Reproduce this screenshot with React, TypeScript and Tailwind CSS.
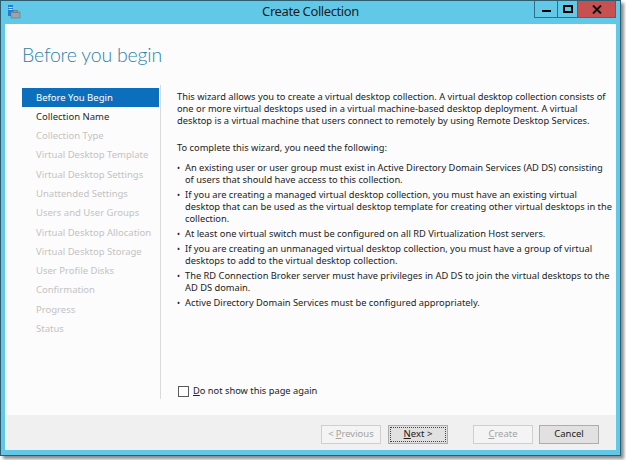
import React from "react";

const FONT = { fontFamily: '"Segoe UI", "Noto Sans", "Open Sans", sans-serif' };

const steps = [
  "Before You Begin",
  "Collection Name",
  "Collection Type",
  "Virtual Desktop Template",
  "Virtual Desktop Settings",
  "Unattended Settings",
  "Users and User Groups",
  "Virtual Desktop Allocation",
  "Virtual Desktop Storage",
  "User Profile Disks",
  "Confirmation",
  "Progress",
  "Status",
];

const bullets: string[][] = [
  [
    "An existing user or user group must exist in Active Directory Domain Services (AD DS) consisting",
    "of users that should have access to this collection.",
  ],
  [
    "If you are creating a managed virtual desktop collection, you must have an existing virtual",
    "desktop that can be used as the virtual desktop template for creating other virtual desktops in the",
    "collection.",
  ],
  ["At least one virtual switch must be configured on all RD Virtualization Host servers."],
  [
    "If you are creating an unmanaged virtual desktop collection, you must have a group of virtual",
    "desktops to add to the virtual desktop collection.",
  ],
  [
    "The RD Connection Broker server must have privileges in AD DS to join the virtual desktops to the",
    "AD DS domain.",
  ],
  ["Active Directory Domain Services must be configured appropriately."],
];

function Lines({ lines }: { lines: string[] }) {
  return (
    <>
      {lines.map((l, i) => (
        <div key={i} className="whitespace-nowrap">
          {l}
        </div>
      ))}
    </>
  );
}

function Btn({
  children,
  disabled,
  focused,
}: {
  children: React.ReactNode;
  disabled?: boolean;
  focused?: boolean;
}) {
  return (
    <div
      className={
        "w-[60px] h-[19px] flex items-center justify-center text-[9.5px] border " +
        (disabled
          ? "border-[#cfcfcf] bg-[#f4f4f4] text-[#a3a3a3]"
          : "border-[#adadad] bg-[#e1e1e1] text-[#1a1a1a]")
      }
    >
      {focused ? (
        <div className="w-[56px] h-[15px] border border-dotted border-[#444] flex items-center justify-center">
          {children}
        </div>
      ) : (
        children
      )}
    </div>
  );
}

export default function App() {
  return (
    <div className="w-[626px] h-[460px] bg-white overflow-hidden" style={FONT}>
      <div className="w-[621px] h-[456px] bg-[#62c8e8] border border-[#2f5d70] shadow-[3px_3px_3px_rgba(0,0,0,0.45)] flex flex-col">
        {/* title bar */}
        <div className="h-[22px] flex items-start relative">
          <div className="w-[26px] h-[22px] flex items-center justify-center">
            <svg width="14" height="14" viewBox="0 0 14 14">
              <rect x="1" y="0" width="5" height="11" fill="#1f7fd0" />
              <rect x="1.5" y="2" width="4" height="1" fill="#bfe3ff" />
              <rect x="1.5" y="4" width="4" height="1" fill="#bfe3ff" />
              <rect x="4" y="7" width="9" height="6" fill="#9aa3aa" stroke="#6c757d" strokeWidth="0.6" />
              <rect x="6.5" y="5.5" width="4" height="2" fill="none" stroke="#6c757d" strokeWidth="0.8" />
            </svg>
          </div>
          <div className="flex-1 h-[22px] flex items-center justify-center text-[13px] tracking-[-0.4px] text-[#1c1c1c] pl-[60px]">
            Create Collection
          </div>
          <div className="flex h-[17px] border-b border-l border-r border-[#2f6f88] mr-[4px]">
            <div className="w-[23px] h-full flex items-end justify-center pb-[5px] border-r border-[#2f6f88]">
              <div className="w-[9px] h-[2px] bg-black" />
            </div>
            <div className="w-[20px] h-full flex items-center justify-center border-r border-[#2f6f88]">
              <div className="w-[10px] h-[8px] border-2 border-black" />
            </div>
            <div className="w-[37px] h-full bg-[#c75050] flex items-center justify-center">
              <svg width="10" height="9" viewBox="0 0 10 9">
                <path d="M1 0.5 L9 8.5 M9 0.5 L1 8.5" stroke="#111" strokeWidth="2" />
              </svg>
            </div>
          </div>
        </div>
        {/* client area */}
        <div className="mx-[4px] mb-[5px] mt-[1px] flex-1 flex flex-col bg-[#fcfcfc]">
          <div className="flex-1 flex flex-col">
            <div
              className="pl-[17px] pt-[21px] h-[64px] text-[19.5px] font-light text-[#2f83ac] leading-none tracking-[-0.2px]"
              style={{ fontFamily: 'Lato, "Noto Sans", sans-serif' }}
            >
              Before you begin
            </div>
            <div className="flex flex-1">
              <div className="w-[137px] ml-[17px] flex flex-col text-[9.5px]">
                {steps.map((s, i) => (
                  <div
                    key={s}
                    className={
                      "h-[19.3px] flex items-center pl-[14px] whitespace-nowrap " +
                      (i === 0
                        ? "bg-[#0c6fbd] text-white"
                        : i === 1
                        ? "text-[#2a2a2a]"
                        : "text-[#c3c3c3]")
                    }
                  >
                    {s}
                  </div>
                ))}
              </div>
              <div className="w-px bg-[#dadada] mt-[-3px] mb-[16px] ml-[1px]" />
              <div className="flex-1 pl-[16px] flex flex-col text-[9.3px] leading-[12px] text-[#222]">
                <div className="pt-[3px]">
                  <Lines
                    lines={[
                      "This wizard allows you to create a virtual desktop collection. A virtual desktop collection consists of",
                      "one or more virtual desktops used in a virtual machine-based desktop deployment. A virtual",
                      "desktop is a virtual machine that users connect to remotely by using Remote Desktop Services.",
                    ]}
                  />
                </div>
                <div className="mt-[15px]">To complete this wizard, you need the following:</div>
                <div className="mt-[8px] flex flex-col gap-[3px]">
                  {bullets.map((b, i) => (
                    <div key={i} className="flex">
                      <div className="w-[8px] text-[8px] leading-[12px]">•</div>
                      <div>
                        <Lines lines={b} />
                      </div>
                    </div>
                  ))}
                </div>
                <div className="flex-1" />
                <div className="flex items-center gap-[4px] mb-[18px] pl-[1px]">
                  <div className="w-[11px] h-[11px] border border-[#5a5a5a] bg-white" />
                  <div>
                    <span className="underline">D</span>o not show this page again
                  </div>
                </div>
              </div>
            </div>
          </div>
          <div className="h-[35px] bg-[#f0f0f0] flex items-start pt-[10px] pl-[316px] text-[9.5px]">
            <Btn disabled>
              &lt; <span className="underline ml-[2px]">P</span>revious
            </Btn>
            <div className="w-[7px]" />
            <Btn focused>
              <span className="underline">N</span>ext &gt;
            </Btn>
            <div className="w-[25px]" />
            <Btn disabled>
              <span className="underline">C</span>reate
            </Btn>
            <div className="w-[6px]" />
            <Btn>Cancel</Btn>
          </div>
        </div>
      </div>
    </div>
  );
}
